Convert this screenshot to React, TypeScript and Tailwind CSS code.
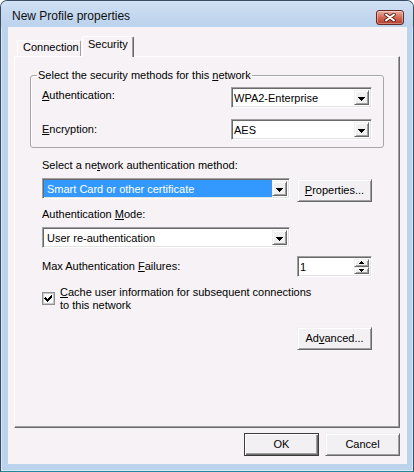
import type { ReactNode } from 'react'

const raised =
  'border border-t-[#f0f0f0] border-l-[#f0f0f0] border-r-[#696969] border-b-[#696969] shadow-[inset_1px_1px_0_#ffffff,inset_-1px_-1px_0_#a0a0a0]'
const sunken =
  'border border-t-[#a0a0a0] border-l-[#a0a0a0] border-r-white border-b-white shadow-[inset_1px_1px_0_#696969,inset_-1px_-1px_0_#e3e3e3]'

function Arrow({ up = false }: { up?: boolean }) {
  return (
    <svg width="7" height="4" viewBox="0 0 7 4" shapeRendering="crispEdges" className={up ? 'rotate-180' : ''}>
      <path d="M0 0h7v1h-1v1h-1v1h-1v1h-1v-1h-1v-1h-1v-1h-1z" fill="#000" />
    </svg>
  )
}

function DropButton() {
  return (
    <div className={`w-[15px] my-[1px] mr-[1px] flex items-center justify-center bg-[#f0f0f0] ${raised}`}>
      <div className="mt-[2px] flex">
        <Arrow />
      </div>
    </div>
  )
}

function Combo({
  value,
  className,
  textClass = 'pl-[1px]',
  selected = false,
}: {
  value: string
  className: string
  textClass?: string
  selected?: boolean
}) {
  return (
    <div className={`h-[21px] flex bg-white p-[1px] ${sunken} ${className}`}>
      <div
        className={`flex-1 flex items-center pt-[2px] whitespace-nowrap ${textClass} ${
          selected ? 'bg-[#3399ff] text-white' : ''
        }`}
      >
        {value}
      </div>
      <DropButton />
    </div>
  )
}

function Btn({ children, isDefault = false }: { children: ReactNode; isDefault?: boolean }) {
  return (
    <button
      type="button"
      className={`w-[75px] h-[23px] flex items-center justify-center pb-[1px] bg-[#f3f0f3] ${
        isDefault
          ? 'border border-[#3c3c3c] shadow-[inset_1px_1px_0_#ffffff,inset_-1px_-1px_0_#696969,inset_-2px_-2px_0_#a0a0a0]'
          : raised
      }`}
    >
      {children}
    </button>
  )
}

function Spinner() {
  return (
    <div className={`w-[75px] h-[21px] flex bg-white p-[1px] ${sunken}`}>
      <div className="flex-1 flex items-center pt-[2px] pl-[1px]">1</div>
      <div className="w-[15px] my-[1px] mr-[1px] flex flex-col">
        <div className={`flex-1 flex items-center justify-center bg-[#f0f0f0] ${raised}`}>
          <svg width="5" height="3" viewBox="0 0 5 3" shapeRendering="crispEdges">
            <path d="M2 0h1v1h1v1h1v1h-5v-1h1v-1h1z" fill="#000" />
          </svg>
        </div>
        <div className={`flex-1 flex items-center justify-center bg-[#f0f0f0] ${raised}`}>
          <svg width="5" height="3" viewBox="0 0 5 3" shapeRendering="crispEdges">
            <path d="M0 0h5v1h-1v1h-1v1h-1v-1h-1v-1h-1z" fill="#000" />
          </svg>
        </div>
      </div>
    </div>
  )
}

function CheckBox() {
  return (
    <svg width="13" height="13" viewBox="0 0 13 13" shapeRendering="crispEdges" className="shrink-0 mt-[6px]">
      <rect x="0.5" y="0.5" width="12" height="12" fill="#f4f4f4" stroke="#8e8f8f" />
      <rect x="1.5" y="1.5" width="10" height="10" fill="#f0f0f0" stroke="#c8c8c8" />
      <rect x="2" y="2" width="9" height="9" fill="#fbfbfb" />
      <path d="M3 5h1v1h1v1h1v-1h1v-1h1v-1h1v-1h1v3h-1v1h-1v1h-1v1h-1v1h-1v-1h-1v-1h-1v-1h-1z" fill="#000" />
    </svg>
  )
}

function CloseButton() {
  return (
    <div className="mt-[1px] w-[28px] h-[15px] rounded-[3px] border border-[#6a2a24] bg-gradient-to-b from-[#eab0a2] via-[#d06a55] to-[#b53b2b] shadow-[inset_0_0_0_1px_rgba(255,255,255,0.35)] flex items-center justify-center">
      <svg width="12" height="9" viewBox="0 0 12 9">
        <path d="M2 1.5L10 7.5M10 1.5L2 7.5" stroke="#5a1f19" strokeWidth="3.6" strokeLinecap="round" />
        <path d="M2 1.5L10 7.5M10 1.5L2 7.5" stroke="#ffffff" strokeWidth="2" strokeLinecap="round" />
      </svg>
    </div>
  )
}

export default function App() {
  return (
    <div className="w-[414px] h-[472px] flex flex-col bg-[#bcd3ee] border border-[#3b4d63] border-b-[#23899a] rounded-t-[7px] overflow-hidden text-[11px] leading-[13px] text-black font-['Liberation_Sans',Arial,sans-serif] shadow-[inset_0_0_0_1px_rgba(255,255,255,0.45)]">
      {/* title bar */}
      <div className="h-[26px] shrink-0 flex items-start justify-between pt-[8px] pl-[11px] pr-[9px] bg-gradient-to-b from-[#d2e1f3] via-[#c4d8ef] to-[#bcd3ee]">
        <span className="text-[12px] leading-[15px] text-[#101010]">New Profile properties</span>
        <CloseButton />
      </div>

      {/* client area */}
      <div className="h-[437px] ml-[7px] mr-[6px] bg-[#f6f2f5] flex flex-col pl-[6px] pr-[7px] pt-[9px]">
        {/* tabs */}
        <div className="h-[20px] flex items-end ml-[3px]">
          <div className="w-[64px] h-[16px] pl-[5px] border-t border-l border-r border-t-white border-l-white border-r-[#a0a0a0] rounded-t-[2px]">
            Connection
          </div>
          <div className="relative z-10 ml-[1px] -mb-px w-[52px] h-[21px] pl-[5px] pt-[1px] bg-[#f6f2f5] border-t border-l border-r border-t-white border-l-white border-r-[#696969] rounded-t-[2px] shadow-[inset_-1px_0_0_#a0a0a0]">
            Security
          </div>
        </div>

        {/* tab panel */}
        <div className="h-[372px] border border-t-white border-l-white border-r-[#696969] border-b-[#696969] shadow-[inset_-1px_-1px_0_#a0a0a0]">
          {/* group box */}
          <div className="relative ml-[15px] mt-[18px] w-[354px] h-[73px] border border-[#a7a7a7] rounded-[3px] shadow-[inset_1px_1px_0_#ffffff] px-[11px] pt-[11px]">
            <span className="absolute -top-[7px] left-[6px] px-[1px] bg-[#f6f2f5]">
              Select the security methods for this <u>n</u>etwork
            </span>
            <div className="flex justify-between">
              <span className="pt-[2px]">
                <u>A</u>uthentication:
              </span>
              <Combo className="w-[141px]" value="WPA2-Enterprise" />
            </div>
            <div className="flex justify-between mt-[11px]">
              <span className="pt-[4px]">
                <u>E</u>ncryption:
              </span>
              <Combo className="w-[141px]" value="AES" />
            </div>
          </div>

          <div className="ml-[27px] w-[330px]">
            <div className="mt-[11px]">
              Select a ne<u>t</u>work authentication method:
            </div>
            <div className="mt-[6px] flex justify-between items-start">
              <Combo className="w-[248px]" textClass="pl-[3px]" value="Smart Card or other certificate" selected />
              <div className="mt-[1px]">
                <Btn>
                  <span>
                    <u>P</u>roperties...
                  </span>
                </Btn>
              </div>
            </div>
            <div className="mt-[6px]">
              Authentication <u>M</u>ode:
            </div>
            <div className="mt-[6px]">
              <Combo className="w-[248px]" textClass="pl-[3px]" value="User re-authentication" />
            </div>
            <div className="mt-[8px] flex justify-between items-start">
              <span className="pt-[4px]">
                Max Authentication <u>F</u>ailures:
              </span>
              <Spinner />
            </div>
            <div className="mt-[9px] flex items-start">
              <CheckBox />
              <div className="ml-[5px]">
                <u>C</u>ache user information for subsequent connections
                <br />
                to this network
              </div>
            </div>
            <div className="mt-[15px] flex justify-end">
              <Btn>
                <span>
                  Ad<u>v</u>anced...
                </span>
              </Btn>
            </div>
          </div>
        </div>

        {/* dialog buttons */}
        <div className="mt-[5px] flex justify-end gap-[6px]">
          <Btn isDefault>OK</Btn>
          <Btn>Cancel</Btn>
        </div>
      </div>
    </div>
  )
}
